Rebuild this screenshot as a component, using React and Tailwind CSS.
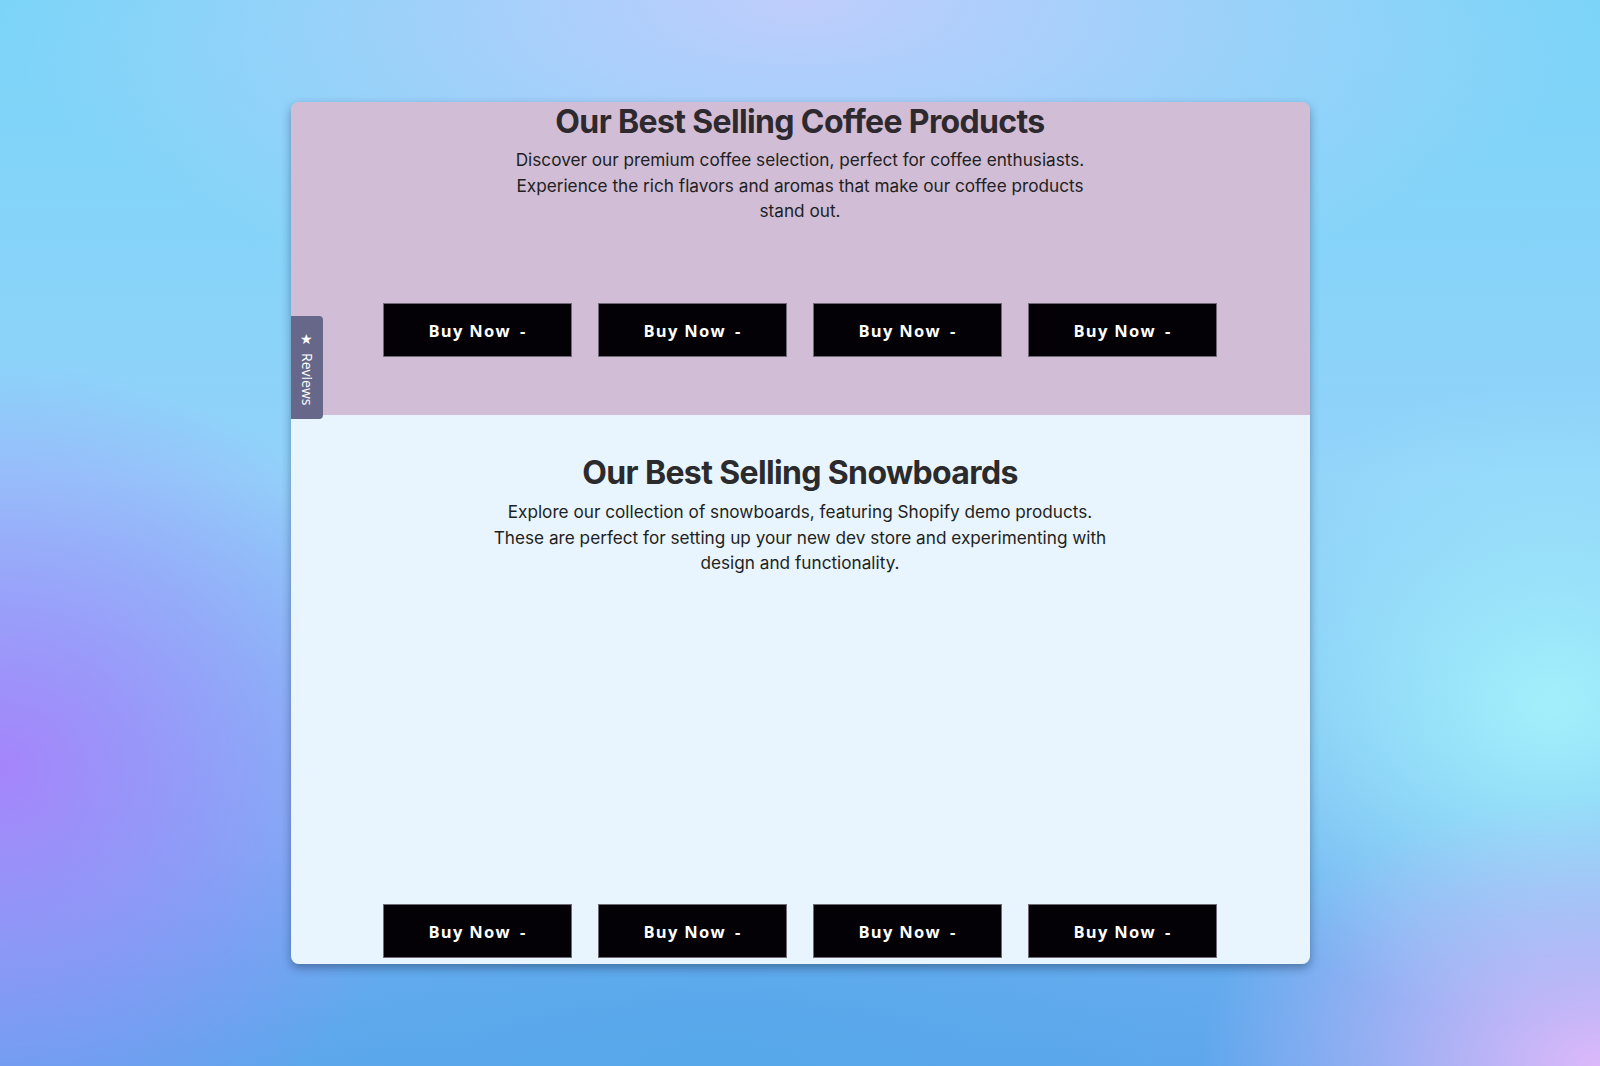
import React from 'react';

const BuyRow = () => (
    <div className="flex justify-center gap-[26px]">
        {[0, 1, 2, 3].map(i => (
            <button key={i}
                className="w-[189px] h-[54px] pt-[3px] bg-[#030105] border border-[#6f6a75] text-white text-[16.5px] font-bold tracking-[0.08em] flex items-center justify-center"
                style={{ fontFamily: '"Open Sans", "Noto Sans", sans-serif' }}>
                Buy Now<span className="ml-[9px]">-</span>
            </button>
        ))}
    </div>
);

const App = () => {
    return (
        <div className="w-[1600px] h-[1066px] overflow-hidden flex justify-center pt-[102px] bg-[radial-gradient(ellipse_50%_30%_at_50%_0%,#bfcdfc_0%,transparent_100%),radial-gradient(ellipse_28%_38%_at_0%_72%,#a585fb_0%,transparent_100%),radial-gradient(ellipse_25%_25%_at_100%_100%,#ddb9fa_0%,transparent_100%),radial-gradient(ellipse_25%_30%_at_97%_66%,#a3f0fb_0%,transparent_100%),radial-gradient(ellipse_50%_25%_at_45%_100%,#56a8ea_0%,transparent_100%),linear-gradient(180deg,#7bd5f8_0%,#92d2fa_45%,#63a6ee_100%)]"
            style={{ fontFamily: 'Inter, "Noto Sans", sans-serif' }}>
            <div className="relative w-[1019px] h-[862px] rounded-lg overflow-hidden shadow-[0_4px_10px_rgba(20,30,60,0.4)] flex flex-col">
                <section className="h-[313px] pt-[2px] bg-[#d1bdd5] flex flex-col items-center">
                    <h2 className="text-[32px] leading-[36px] font-bold tracking-[-0.02em] text-[#2d292e]">
                        Our Best Selling Coffee Products
                    </h2>
                    <p className="mt-[7px] max-w-[596px] text-center text-[17.2px] leading-[25.5px] text-[#211f23]">
                        Discover our premium coffee selection, perfect for coffee enthusiasts. Experience the rich flavors and aromas that make our coffee products stand out.
                    </p>
                    <div className="mt-auto mb-[58px] w-full">
                        <BuyRow />
                    </div>
                </section>

                <section className="flex-1 bg-[#e8f5fe] flex flex-col items-center pt-[40px]">
                    <h2 className="text-[32px] leading-[36px] font-bold tracking-[-0.02em] text-[#2b2a2d]">
                        Our Best Selling Snowboards
                    </h2>
                    <p className="mt-[8px] max-w-[636px] text-center text-[17.2px] leading-[25.5px] text-[#1f1f22]">
                        Explore our collection of snowboards, featuring Shopify demo products. These are perfect for setting up your new dev store and experimenting with design and functionality.
                    </p>
                    <div className="mt-auto mb-[6px] w-full">
                        <BuyRow />
                    </div>
                </section>

                <div className="absolute left-0 top-[214px] w-[32px] h-[103px] bg-[#676789] rounded-r-[4px] flex flex-col items-center pt-[16px] gap-[7px] text-white"
                    style={{ fontFamily: '"Open Sans", "Noto Sans", sans-serif' }}>
                    <span className="text-[14px] leading-none">★</span>
                    <span className="text-[14px] leading-none [writing-mode:vertical-rl]">Reviews</span>
                </div>
            </div>
        </div>
    );
};

export default App;
